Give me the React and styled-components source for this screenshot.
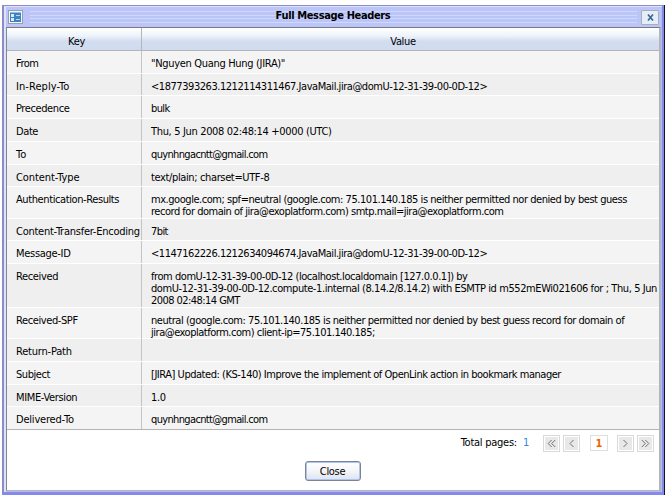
import React from "react";
import styled, { createGlobalStyle } from "styled-components";

const GlobalStyle = createGlobalStyle`
  * { box-sizing: border-box; }
  body { margin: 0; background: #fff; overflow: hidden; }
`;

const Screen = styled.main`
  width: 669px;
  height: 497px;
  padding: 5px 0 0 2px;
  font: 11px/12px "DejaVu Sans Condensed", "DejaVu Sans", sans-serif;
  font-stretch: condensed;
  color: #000;
`;

const Dialog = styled.section`
  width: 662px;
  height: 490px;
  display: flex;
  flex-direction: column;
  border-style: solid;
  border-color: #8c8cca #8589e8 #8589ed #8c8cca;
  border-width: 1px 2px 3px 2px;
  background: #bcc5f7;
  box-shadow: inset 2px 1px #dce3fb, inset -1px -1px #b4bdf2, 1px 0 #14142c;
  padding: 0 1px 1px 2px;
`;

const TitleBar = styled.header`
  height: 21px;
  flex: none;
  display: flex;
  align-items: center;
  padding: 1px 2px 0 2px;
`;

const Stripes = styled.div`
  flex: 1;
  height: 16px;
  margin: 0 4px 0 7px;
  background: linear-gradient(
    transparent 2px, #d0d8fb 2px 3px, transparent 3px 6px, #d0d8fb 6px 7px,
    transparent 7px 9px, #d0d8fb 9px 10px, transparent 10px 13px, #d0d8fb 13px 14px,
    transparent 14px
  );
  display: flex;
  justify-content: center;
`;

const Title = styled.h1`
  margin: 0;
  padding-right: 1px;
  font: bold 11px/14px "DejaVu Sans Condensed", "DejaVu Sans", sans-serif;
  letter-spacing: -0.36px;
  white-space: nowrap;
`;

const CloseIconButton = styled.button`
  width: 18px;
  height: 15px;
  padding: 0;
  border: 1px solid #a9adc4;
  border-radius: 1px;
  background: #e7edf4;
  display: grid;
  place-items: center;
`;

const Body = styled.div`
  flex: 1;
  display: flex;
  flex-direction: column;
  border: solid #b4b5b7;
  border-width: 1px 2px 1px 1px;
  border-top-color: #777985;
  border-left-color: #85868e;
  background: #fff;
`;

const HeaderRow = styled.div`
  height: 23px;
  display: grid;
  grid-template-columns: 135px 1fr;
  background: linear-gradient(#fff 0, #edf3fb 8px, #d3ddf0 13px, #d0dbef 22px);
  border-bottom: 1px solid #b5b5b8;
`;

const HeaderCell = styled.div`
  text-align: center;
  padding: 8px ${(p) => (p.$key ? 0 : 1)}px 0 ${(p) => (p.$key ? 5 : 6)}px;
  border-right: ${(p) => (p.$key ? "1px solid #b4b5b7" : "0")};
  letter-spacing: -0.35px;
`;

const Row = styled.div`
  height: ${(p) => p.$height}px;
  display: grid;
  grid-template-columns: 135px 1fr;
  background: ${(p) => (p.$alt ? "#efefef" : "#f4f4f4")};
  border-bottom: ${(p) => (p.$last ? "1px solid #b4b4b4" : "1px solid #fff")};
`;

const Cell = styled.div`
  padding: 7px 0 0 9px;
  border-right: ${(p) => (p.$key ? "1px solid #c4c4c4" : "0")};
`;

const Line = styled.div`
  height: 12px;
  white-space: pre;
  letter-spacing: ${(p) => p.$track}px;
`;

const Footer = styled.footer`
  flex: 1;
  display: flex;
  flex-direction: column;
`;

const Pager = styled.nav`
  height: 31px;
  display: flex;
  align-items: flex-start;
  justify-content: flex-end;
  padding: 5px 5px 0 0;
`;

const PagerLabel = styled.span`
  padding-top: 2px;
  white-space: pre;
  margin-right: 14px;
  letter-spacing: -0.25px;
`;

const Total = styled.span`
  color: #2f8ae6;
  margin-left: 6px;
`;

const PageButton = styled.button`
  width: 17px;
  height: 17px;
  margin-right: ${(p) => p.$gap}px;
  padding: 0;
  border: 1px solid #d9d9d9;
  box-shadow: inset 0 0 0 1px #fff;
  background: #e8e8e8;
  display: grid;
  place-items: center;
`;

const CurrentPage = styled.span`
  width: 18px;
  height: 16px;
  margin-right: 9px;
  border: 1px solid #dedede;
  color: #ef6500;
  font-weight: bold;
  line-height: 15px;
  text-align: center;
`;

const CloseButton = styled.button`
  align-self: center;
  width: 56px;
  height: 20px;
  margin-left: -1px;
  padding: 1px 0 0;
  border: 1px solid #7e838f;
  border-radius: 3px;
  box-shadow: inset 0 0 0 1px #a9c6f4;
  background: linear-gradient(#fff, #f4f5f9 50%, #dfe3ee);
  font: 11px/13px "DejaVu Sans Condensed", "DejaVu Sans", sans-serif;
  letter-spacing: -0.3px;
  color: #000;
`;

/* Each text is paired with its letter spacing in pixels. */
const rows = [
  { h: 23, k: ["From", -0.5], v: [['"Nguyen Quang Hung (JIRA)"', -0.32]] },
  { h: 22, k: ["In-Reply-To", 0.07], v: [["<1877393263.1212114311467.JavaMail.jira@domU-12-31-39-00-0D-12>", -0.454]] },
  { h: 23, k: ["Precedence", -0.4], v: [["bulk", -0.6]] },
  { h: 23, k: ["Date", -0.4], v: [["Thu, 5 Jun 2008 02:48:14 +0000 (UTC)", -0.34]] },
  { h: 23, k: ["To", 0.2], v: [["quynhngacntt@gmail.com", -0.65]] },
  { h: 22, k: ["Content-Type", -0.08], v: [["text/plain; charset=UTF-8", -0.37]] },
  {
    h: 32,
    k: ["Authentication-Results", -0.4],
    v: [
      ["mx.google.com; spf=neutral (google.com: 75.101.140.185 is neither permitted nor denied by best guess", -0.455],
      ["record for domain of jira@exoplatform.com) smtp.mail=jira@exoplatform.com", -0.48],
    ],
  },
  { h: 22, k: ["Content-Transfer-Encoding", -0.25], v: [["7bit", -0.6]] },
  { h: 23, k: ["Message-ID", -0.3], v: [["<1147162226.1212634094674.JavaMail.jira@domU-12-31-39-00-0D-12>", -0.454]] },
  {
    h: 44,
    k: ["Received", -0.35],
    v: [
      ["from domU-12-31-39-00-0D-12 (localhost.localdomain [127.0.0.1]) by", -0.44],
      ["domU-12-31-39-00-0D-12.compute-1.internal (8.14.2/8.14.2) with ESMTP id m552mEWi021606 for ; Thu, 5 Jun", -0.415],
      ["2008 02:48:14 GMT", -0.55],
    ],
  },
  {
    h: 31,
    k: ["Received-SPF", -0.4],
    v: [
      ["neutral (google.com: 75.101.140.185 is neither permitted nor denied by best guess record for domain of", -0.455],
      ["jira@exoplatform.com) client-ip=75.101.140.185;", -0.48],
    ],
  },
  { h: 23, k: ["Return-Path", -0.2], v: [] },
  { h: 23, k: ["Subject", -0.45], v: [["[JIRA] Updated: (KS-140) Improve the implement of OpenLink action in bookmark manager", -0.47]] },
  { h: 22, k: ["MIME-Version", -0.35], v: [["1.0", -0.4]] },
  { h: 23, k: ["Delivered-To", -0.2], v: [["quynhngacntt@gmail.com", -0.65]] },
];

const WindowIcon = () => (
  <svg width="15" height="14" viewBox="0 0 15 14" shapeRendering="crispEdges">
    <rect width="15" height="14" fill="#9a9fae" />
    <rect x="1" y="1" width="13" height="12" fill="#f4f7fa" />
    <rect x="2" y="2" width="11" height="10" fill="#3f84c2" />
    <rect x="2" y="2" width="11" height="1" fill="#8fbfe8" />
    <rect x="3" y="4" width="3" height="3" fill="#d9ecfb" />
    <rect x="3" y="8" width="3" height="3" fill="#d9ecfb" />
    <rect x="8" y="5" width="4" height="1" fill="#b9d9f3" />
    <rect x="8" y="9" width="4" height="1" fill="#b9d9f3" />
  </svg>
);

const Chevron = ({ double, right }) => (
  <svg width="9" height="9" viewBox="0 0 9 9" fill="none" stroke="#707070" strokeWidth="1">
    <g transform={right ? "translate(9 0) scale(-1 1)" : undefined}>
      <path d={double ? "M4.7 1 1.2 4.5 4.7 8M8.2 1 4.7 4.5 8.2 8" : "M6.5 1 3 4.5 6.5 8"} />
    </g>
  </svg>
);

export default function App() {
  return (
    <Screen>
      <GlobalStyle />
      <Dialog>
        <TitleBar>
          <WindowIcon />
          <Stripes>
            <Title>Full Message Headers</Title>
          </Stripes>
          <CloseIconButton aria-label="Close window">
            <svg width="7" height="7" viewBox="0 0 7 7" stroke="#376b9d" strokeWidth="1.7">
              <path d="M1 .5 6 6.5M6 .5 1 6.5" />
            </svg>
          </CloseIconButton>
        </TitleBar>
        <Body>
          <HeaderRow>
            <HeaderCell $key>Key</HeaderCell>
            <HeaderCell>Value</HeaderCell>
          </HeaderRow>
          {rows.map((r, i) => (
            <Row key={r.k[0]} $height={r.h} $alt={i % 2 === 1} $last={i === rows.length - 1}>
              <Cell $key>
                <Line $track={r.k[1]}>{r.k[0]}</Line>
              </Cell>
              <Cell>
                {r.v.map(([text, track]) => (
                  <Line key={text} $track={track}>{text}</Line>
                ))}
              </Cell>
            </Row>
          ))}
          <Footer>
            <Pager>
              <PagerLabel>Total pages:<Total>1</Total></PagerLabel>
              <PageButton $gap={3} aria-label="First page"><Chevron double /></PageButton>
              <PageButton $gap={10} aria-label="Previous page"><Chevron /></PageButton>
              <CurrentPage>1</CurrentPage>
              <PageButton $gap={3} aria-label="Next page"><Chevron right /></PageButton>
              <PageButton $gap={0} aria-label="Last page"><Chevron double right /></PageButton>
            </Pager>
            <CloseButton>Close</CloseButton>
          </Footer>
        </Body>
      </Dialog>
    </Screen>
  );
}
